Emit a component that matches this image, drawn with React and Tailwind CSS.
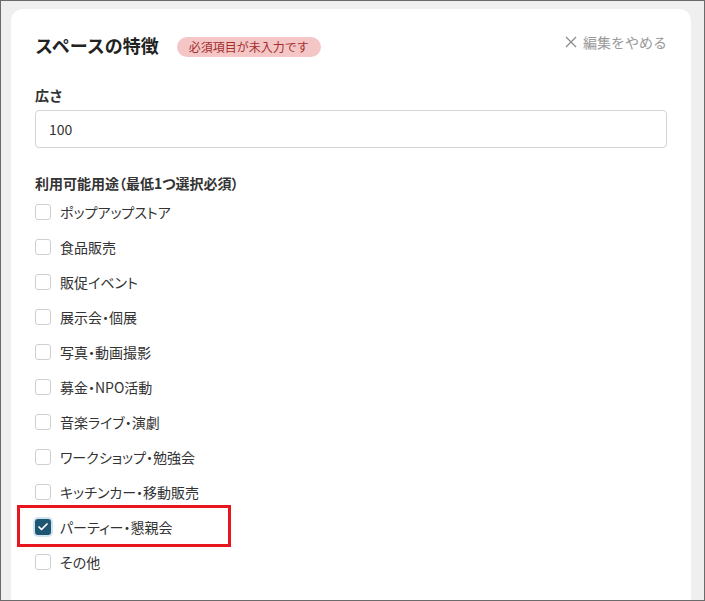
import React from 'react'
import { Check } from 'lucide-react'

const USES = [
  'ポップアップストア',
  '食品販売',
  '販促イベント',
  '展示会・個展',
  '写真・動画撮影',
  '募金・NPO活動',
  '音楽ライブ・演劇',
  'ワークショップ・勉強会',
  'キッチンカー・移動販売',
  'パーティー・懇親会',
  'その他'
]

const CHECKED = 'パーティー・懇親会'

function UseRow({ label }) {
  const checked = label === CHECKED
  return (
    <div className="relative flex h-[35px] items-center gap-[9px]">
      {checked ? (
        <span className="flex h-4 w-4 items-center justify-center rounded-[3px] bg-[#1d5572] ring-2 ring-[#cfe3f0]">
          <Check className="h-3 w-3 text-white" strokeWidth={3.5} />
        </span>
      ) : (
        <span className="h-4 w-4 rounded-[3px] border border-[#cfcfcf] bg-white" />
      )}
      <span className="text-sm text-[#333] [font-feature-settings:'palt']">{label}</span>
      {checked && (
        <div className="absolute left-[-18px] top-[-4px] h-[42px] w-[214px] border-[3px] border-[#e8141e]" />
      )}
    </div>
  )
}

export default function App() {
  return (
    <div
      className="h-[601px] w-[705px] overflow-hidden border border-[#6b6b6b] bg-[#efefef] pl-[10px] pt-[8px]"
      style={{ fontFamily: '"Noto Sans CJK JP", "Noto Sans", sans-serif' }}
    >
      <div className="h-[620px] w-[680px] rounded-xl bg-white px-6 pt-[26px]">
        <div className="flex items-start justify-between">
          <div className="flex items-start gap-[18px]">
            <h2 className="text-[18px] font-bold leading-5 text-[#222]">スペースの特徴</h2>
            <span className="mt-[2px] rounded-full bg-[#f4c6c6] px-3 text-xs leading-5 text-[#a32e2d]">
              必須項目が未入力です
            </span>
          </div>
          <button className="mt-[-3px] flex items-center gap-[6px] text-sm leading-5 text-[#999]">
            <svg width="12" height="12" viewBox="0 0 12 12" className="text-[#8a8a8a]">
              <path d="M1 1 L11 11 M11 1 L1 11" stroke="currentColor" strokeWidth="1.2" fill="none" />
            </svg>
            編集をやめる
          </button>
        </div>

        <div className="mt-7">
          <label className="block text-sm font-bold leading-5 text-[#333]">広さ</label>
          <input
            readOnly
            value="100"
            className="mt-[5px] h-[38px] w-full rounded border border-[#d4d4d4] px-[13px] text-sm text-[#333] outline-none"
          />
        </div>

        <div className="mt-[25px]">
          <div className="text-sm font-bold leading-5 text-[#333] [font-feature-settings:'palt']">
            利用可能用途（最低1つ選択必須）
          </div>
          <div className="mt-px flex flex-col">
            {USES.map(u => (
              <UseRow key={u} label={u} />
            ))}
          </div>
        </div>
      </div>
    </div>
  )
}
